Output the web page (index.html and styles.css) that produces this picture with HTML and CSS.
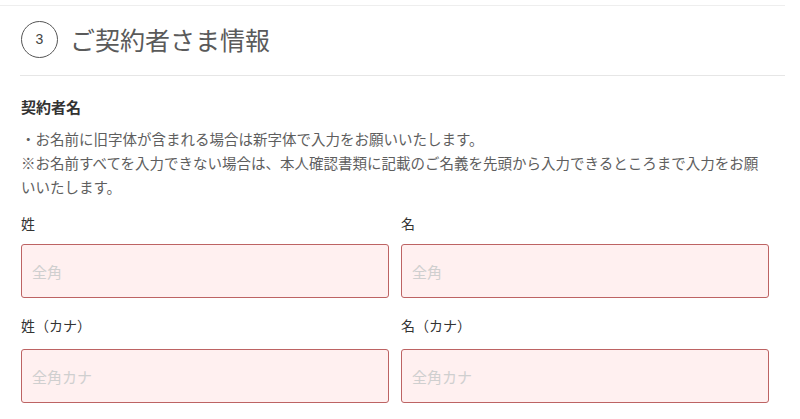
FILE: index.html
```html
<!DOCTYPE html>
<html lang="ja">
<head>
<meta charset="utf-8">
<title>ご契約者さま情報</title>
<link rel="stylesheet" href="styles.css">
</head>
<body>
<div class="page">
  <div class="topline"></div>
  <div class="section-head">
    <span class="step">3</span>
    <h2 class="section-title">ご契約者さま情報</h2>
  </div>
  <div class="content">
    <h3 class="group-title">契約者名</h3>
    <p class="notes">・お名前に旧字体が含まれる場合は新字体で入力をお願いいたします。<br>※お名前すべてを入力できない場合は、本人確認書類に記載のご名義を先頭から入力できるところまで入力をお願いいたします。</p>
    <div class="fields">
      <label class="field">
        <span class="label">姓</span>
        <input class="input" type="text" placeholder="全角">
      </label>
      <label class="field">
        <span class="label">名</span>
        <input class="input" type="text" placeholder="全角">
      </label>
      <label class="field field-kana">
        <span class="label">姓（カナ）</span>
        <input class="input" type="text" placeholder="全角カナ">
      </label>
      <label class="field field-kana">
        <span class="label">名（カナ）</span>
        <input class="input" type="text" placeholder="全角カナ">
      </label>
    </div>
  </div>
</div>
</body>
</html>
```

FILE: styles.css
```css
html, body {
  margin: 0;
  padding: 0;
  background: #ffffff;
}

body {
  font-family: "Noto Sans CJK JP", "Noto Sans", sans-serif;
  color: #333333;
  overflow: hidden;
}

.page {
  width: 785px;
}

.topline {
  height: 5px;
  border-bottom: 1px solid #eeeeee;
}

.section-head {
  margin-left: 20px;
  height: 66px;
  padding-bottom: 3px;
  display: flex;
  align-items: center;
  gap: 12px;
  border-bottom: 1px solid #e6e6e6;
}

.step {
  margin-left: 1px;
  width: 35px;
  height: 35px;
  border: 1px solid #555555;
  border-radius: 50%;
  display: flex;
  align-items: center;
  justify-content: center;
  font-family: "Liberation Sans", Arial, sans-serif;
  font-size: 14px;
  color: #444444;
}

.section-title {
  margin: 0;
  font-size: 25px;
  font-weight: 400;
  line-height: 30px;
  color: #5a5a5a;
}

.content {
  padding-left: 21px;
  width: 748px;
}

.group-title {
  margin: 20px 0 0;
  font-size: 15px;
  line-height: 22px;
  font-weight: 700;
  color: #333333;
}

.notes {
  margin: 9px 0 0;
  font-size: 14.5px;
  line-height: 24px;
  color: #5e5e5e;
}

.fields {
  display: grid;
  grid-template-columns: 1fr 1fr;
  column-gap: 12px;
  row-gap: 17px;
  margin-top: 14px;
}

.field {
  display: flex;
  flex-direction: column;
  gap: 11px;
}

.label {
  font-size: 14px;
  line-height: 20px;
  color: #333333;
}

.input {
  box-sizing: border-box;
  width: 100%;
  height: 54px;
  margin: 0;
  padding: 0 10px;
  border: 1px solid #bd6363;
  border-radius: 3px;
  background: #fff0f0;
  font-family: "Noto Sans CJK JP", sans-serif;
  font-size: 15px;
  color: #333333;
  outline: none;
}

.input::placeholder {
  color: #cfcfcf;
}

.field-kana {
  gap: 14px;
}
```
